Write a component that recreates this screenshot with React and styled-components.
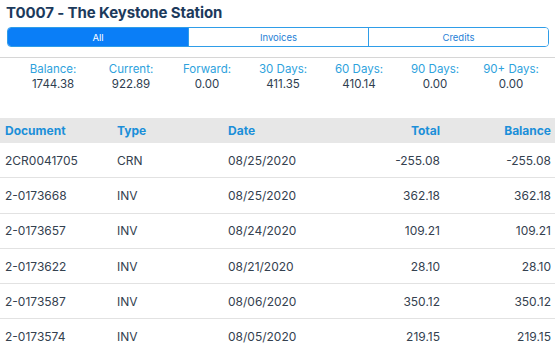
import React from 'react';
import styled, { createGlobalStyle } from 'styled-components';

const Global = createGlobalStyle`
	html, body {
		margin: 0;
		padding: 0;
		background: #fff;
		overflow: hidden;
	}
	body {
		font-family: Inter, "Liberation Sans", sans-serif;
	}
`;

const Page = styled.div`
	width: 555px;
	height: 350px;
	overflow: hidden;
`;
const Title = styled.h1`
	margin: 0;
	padding: 3px 0 0 6px;
	height: 24px;
	font-size: 15px;
	font-weight: 700;
	color: #1c3a5c;
	letter-spacing: -0.1px;
`;
const Segments = styled.div`
	display: grid;
	grid-template-columns: repeat(3, 1fr);
	margin: 0 6px 0 7px;
	height: 20px;
	border: 1px solid #2f9de8;
	border-radius: 4px;
	overflow: hidden;
	box-sizing: border-box;
`;
const Segment = styled.div`
	display: flex;
	align-items: center;
	justify-content: center;
	font-size: 9.5px;
	color: ${p => p.active ? '#fff' : '#1f7fd6'};
	background: ${p => p.active ? '#0a7ef7' : '#fff'};
	& + & {
		border-left: 1px solid #2f9de8;
	}
`;
const Divider = styled.div`
	margin-top: 10px;
	height: 1px;
	background: #d6d6d6;
`;
const Summary = styled.div`
	display: grid;
	grid-template-columns: 80px repeat(6, 76px);
	padding: 4px 0 0 13px;
	height: 60px;
	box-sizing: border-box;
	text-align: center;
	font-size: 11.5px;
	line-height: 15px;
`;
const Label = styled.div`
	color: #2ea2dd;
`;
const Value = styled.div`
	color: #2e3d4f;
`;
const Row = styled.div`
	display: grid;
	grid-template-columns: 112px 111px 1fr 110px 111px;
	align-items: center;
	padding: 0 4px 0 5px;
	height: ${p => p.head ? '25px' : '35.3px'};
	box-sizing: border-box;
	font-size: 12px;
	background: ${p => p.head ? '#e7e7e7' : '#fff'};
	color: ${p => p.head ? '#1b8fd9' : '#34414f'};
	font-weight: ${p => p.head ? 700 : 400};
	border-bottom: ${p => p.head ? 'none' : '1px solid #e2e2e2'};
`;
const Cell = styled.div`
	text-align: ${p => p.right ? 'right' : 'left'};
	white-space: nowrap;
`;

const summary = [
	['Balance:', '1744.38'],
	['Current:', '922.89'],
	['Forward:', '0.00'],
	['30 Days:', '411.35'],
	['60 Days:', '410.14'],
	['90 Days:', '0.00'],
	['90+ Days:', '0.00'],
];

const rows = [
	['2CR0041705', 'CRN', '08/25/2020', '-255.08', '-255.08'],
	['2-0173668', 'INV', '08/25/2020', '362.18', '362.18'],
	['2-0173657', 'INV', '08/24/2020', '109.21', '109.21'],
	['2-0173622', 'INV', '08/21/2020', '28.10', '28.10'],
	['2-0173587', 'INV', '08/06/2020', '350.12', '350.12'],
	['2-0173574', 'INV', '08/05/2020', '219.15', '219.15'],
];

export default function App() {
	return (
		<Page>
			<Global />
			<Title>T0007 - The Keystone Station</Title>
			<Segments>
				<Segment active>All</Segment>
				<Segment>Invoices</Segment>
				<Segment>Credits</Segment>
			</Segments>
			<Divider />
			<Summary>
				{summary.map(([label, value]) => (
					<div key={label}>
						<Label>{label}</Label>
						<Value>{value}</Value>
					</div>
				))}
			</Summary>
			<Row head>
				<Cell>Document</Cell>
				<Cell>Type</Cell>
				<Cell>Date</Cell>
				<Cell right>Total</Cell>
				<Cell right>Balance</Cell>
			</Row>
			{rows.map(r => (
				<Row key={r[0]}>
					<Cell>{r[0]}</Cell>
					<Cell>{r[1]}</Cell>
					<Cell>{r[2]}</Cell>
					<Cell right>{r[3]}</Cell>
					<Cell right>{r[4]}</Cell>
				</Row>
			))}
		</Page>
	);
}
